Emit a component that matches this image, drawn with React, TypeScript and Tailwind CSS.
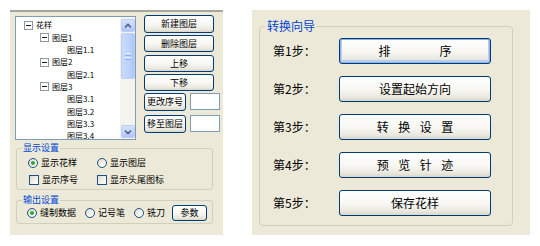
import React from "react";

const xpBtn =
  "border border-[#003C74] rounded-[3px] bg-[linear-gradient(180deg,#ffffff_0%,#f7f6f2_55%,#e9e7de_85%,#d9d5c9_100%)] flex items-center justify-center text-black";

function MinusBox() {
  return (
    <span className="w-[9px] h-[9px] border border-[#8C99A6] bg-white flex items-center justify-center shrink-0">
      <span className="w-[5px] h-[1px] bg-[#1a1a1a]" />
    </span>
  );
}

const treeRows: { lvl: number; box?: boolean; t: string }[] = [
  { lvl: 0, box: true, t: "花样" },
  { lvl: 1, box: true, t: "图层1" },
  { lvl: 2, t: "图层1.1" },
  { lvl: 1, box: true, t: "图层2" },
  { lvl: 2, t: "图层2.1" },
  { lvl: 1, box: true, t: "图层3" },
  { lvl: 2, t: "图层3.1" },
  { lvl: 2, t: "图层3.2" },
  { lvl: 2, t: "图层3.3" },
  { lvl: 2, t: "图层3.4" },
];

function ScrollBtn({ down }: { down?: boolean }) {
  return (
    <div className="w-[14px] h-[13px] rounded-[2px] border border-[#B9CDF8] bg-[linear-gradient(180deg,#D6E2FD_0%,#C1D3FB_60%,#AFC6F5_100%)] flex items-center justify-center">
      <svg width="8" height="6" viewBox="0 0 8 6">
        <path
          d={down ? "M1 1.5 L4 4.5 L7 1.5" : "M1 4.5 L4 1.5 L7 4.5"}
          fill="none"
          stroke="#4D6185"
          strokeWidth="1.6"
        />
      </svg>
    </div>
  );
}

function Tree() {
  return (
    <div className="w-[121px] h-[124px] border border-[#7F9DB9] bg-white flex overflow-hidden">
      <div className="flex-1 pt-[2px] overflow-hidden">
        {treeRows.map((r, i) => (
          <div
            key={i}
            className="h-[12.35px] flex items-center text-[8px] leading-[10px] text-black whitespace-nowrap"
            style={{ paddingLeft: [8, 24, 39][r.lvl] }}
          >
            {r.box ? <MinusBox /> : <span className="w-[9px] shrink-0" />}
            <span className="ml-[3px]">{r.t}</span>
          </div>
        ))}
      </div>
      <div className="w-[15px] h-full bg-[#F4F3EE] flex flex-col items-center pt-[2px] pb-[1px]">
        <ScrollBtn />
        <div className="mt-[1px] w-[14px] h-[46px] rounded-[2px] border border-[#B9CDF8] bg-[linear-gradient(90deg,#C9DAFC_0%,#BED1FA_60%,#AEC5F4_100%)] flex flex-col items-center justify-center gap-[1px]">
          <span className="w-[6px] h-[1px] bg-[#EEF4FE]" />
          <span className="w-[6px] h-[1px] bg-[#8CB0F8]" />
          <span className="w-[6px] h-[1px] bg-[#EEF4FE]" />
          <span className="w-[6px] h-[1px] bg-[#8CB0F8]" />
        </div>
        <div className="flex-1" />
        <ScrollBtn down />
      </div>
    </div>
  );
}

function Radio({ checked }: { checked?: boolean }) {
  return (
    <span className="w-[10px] h-[10px] rounded-full border border-[#1C5180] bg-[linear-gradient(135deg,#DCD9CF_0%,#F6F5F1_60%,#ffffff_100%)] flex items-center justify-center shrink-0">
      {checked && <span className="w-[4px] h-[4px] rounded-full bg-[#2CA82C]" />}
    </span>
  );
}

function Check() {
  return (
    <span className="w-[10px] h-[10px] border border-[#1C5180] bg-[linear-gradient(135deg,#DCDCD7_0%,#F3F3EF_60%,#ffffff_100%)] shrink-0" />
  );
}

function LeftPanel() {
  return (
    <div className="w-[213px] h-[225px] bg-[#ECE9D8] border-t-2 border-[#A8A69C] shrink-0">
      <div className="flex mt-[4px] ml-[5px]">
        <Tree />
        <div className="ml-[8px] -mt-[1px] flex flex-col text-[9px] leading-[10px]">
          <div className={`${xpBtn} w-[70px] h-[18px]`}>新建图层</div>
          <div className={`${xpBtn} w-[70px] h-[17px] mt-[2px]`}>删除图层</div>
          <div className={`${xpBtn} w-[70px] h-[17px] mt-[3px]`}>上移</div>
          <div className={`${xpBtn} w-[70px] h-[17px] mt-[2px]`}>下移</div>
          <div className="flex gap-[4px] mt-[2px]">
            <div className={`${xpBtn} w-[42px] h-[18px]`}>更改序号</div>
            <div className="w-[30px] h-[17px] border border-[#7F9DB9] bg-white" />
          </div>
          <div className="flex gap-[4px] mt-[4px]">
            <div className={`${xpBtn} w-[42px] h-[18px]`}>移至图层</div>
            <div className="w-[30px] h-[17px] border border-[#7F9DB9] bg-white" />
          </div>
        </div>
      </div>
      <fieldset className="ml-[6px] mt-[2px] w-[197px] border border-[#D0D0BF] rounded-[3px] pb-[2px] text-[9px] text-black">
        <legend className="ml-[5px] px-[1px] text-[9px] leading-[12px] text-[#0046D5]">显示设置</legend>
        <div className="mt-[2px] h-[14px] flex items-center pl-[11px]">
          <div className="w-[69px] flex items-center gap-[3px]">
            <Radio checked />
            <span>显示花样</span>
          </div>
          <div className="flex items-center gap-[3px]">
            <Radio />
            <span>显示图层</span>
          </div>
        </div>
        <div className="mt-[3px] h-[14px] flex items-center pl-[12px]">
          <div className="w-[68px] flex items-center gap-[3px]">
            <Check />
            <span>显示序号</span>
          </div>
          <div className="flex items-center gap-[3px]">
            <Check />
            <span>显示头尾图标</span>
          </div>
        </div>
      </fieldset>
      <fieldset className="ml-[6px] mt-[5px] w-[197px] border border-[#D0D0BF] rounded-[3px] pb-[2px] text-[9px] text-black">
        <legend className="ml-[5px] px-[1px] text-[9px] leading-[10px] text-[#0046D5]">输出设置</legend>
        <div className="h-[16px] flex items-center pl-[10px]">
          <div className="w-[58px] flex items-center gap-[3px]">
            <Radio checked />
            <span>缝制数据</span>
          </div>
          <div className="w-[49px] flex items-center gap-[3px]">
            <Radio />
            <span>记号笔</span>
          </div>
          <div className="w-[38px] flex items-center gap-[3px]">
            <Radio />
            <span>铣刀</span>
          </div>
          <div className={`${xpBtn} w-[35px] h-[16px] leading-[10px]`}>参数</div>
        </div>
      </fieldset>
    </div>
  );
}

function Spaced({ chars }: { chars: string[] }) {
  return (
    <div className="flex gap-[9.5px]">
      {chars.map((c, i) => (
        <span key={i}>{c}</span>
      ))}
    </div>
  );
}

function RightPanel() {
  const rows: { label: string; content: React.ReactNode; focus?: boolean }[] = [
    {
      label: "第1步：",
      focus: true,
      content: (
        <div className="flex gap-[49px]">
          <span>排</span>
          <span>序</span>
        </div>
      ),
    },
    { label: "第2步：", content: <span>设置起始方向</span> },
    { label: "第3步：", content: <Spaced chars={["转", "换", "设", "置"]} /> },
    { label: "第4步：", content: <Spaced chars={["预", "览", "针", "迹"]} /> },
    { label: "第5步：", content: <span>保存花样</span> },
  ];
  return (
    <div className="w-[278px] h-[225px] bg-[#ECE9D8] ml-[29px] shrink-0 pt-[9px]">
      <fieldset className="ml-[7px] w-[254px] border border-[#D0D0BF] rounded-[4px] pb-[9px] text-[12px] text-black">
        <legend className="ml-[5px] px-[2px] text-[12px] leading-[14px] text-[#0046D5]">转换向导</legend>
        <div className="mt-[5px] flex flex-col gap-[12px]">
          {rows.map((r, i) => (
            <div key={i} className="flex items-center h-[26px]">
              <div className="w-[79px] pl-[13px] leading-[14px]">{r.label}</div>
              <div
                className={`${xpBtn} w-[152px] h-[26px] leading-[14px] ${
                  r.focus ? "shadow-[inset_0_0_0_1px_#8FB1E8,inset_0_-1px_0_2px_#B7CFF3]" : ""
                }`}
              >
                {r.content}
              </div>
            </div>
          ))}
        </div>
      </fieldset>
    </div>
  );
}

export default function App() {
  return (
    <div className="w-[540px] h-[246px] bg-white flex items-start pt-[10px] pl-[10px] font-['Noto_Sans_CJK_SC','Noto_Sans',sans-serif] overflow-hidden">
      <LeftPanel />
      <RightPanel />
    </div>
  );
}
